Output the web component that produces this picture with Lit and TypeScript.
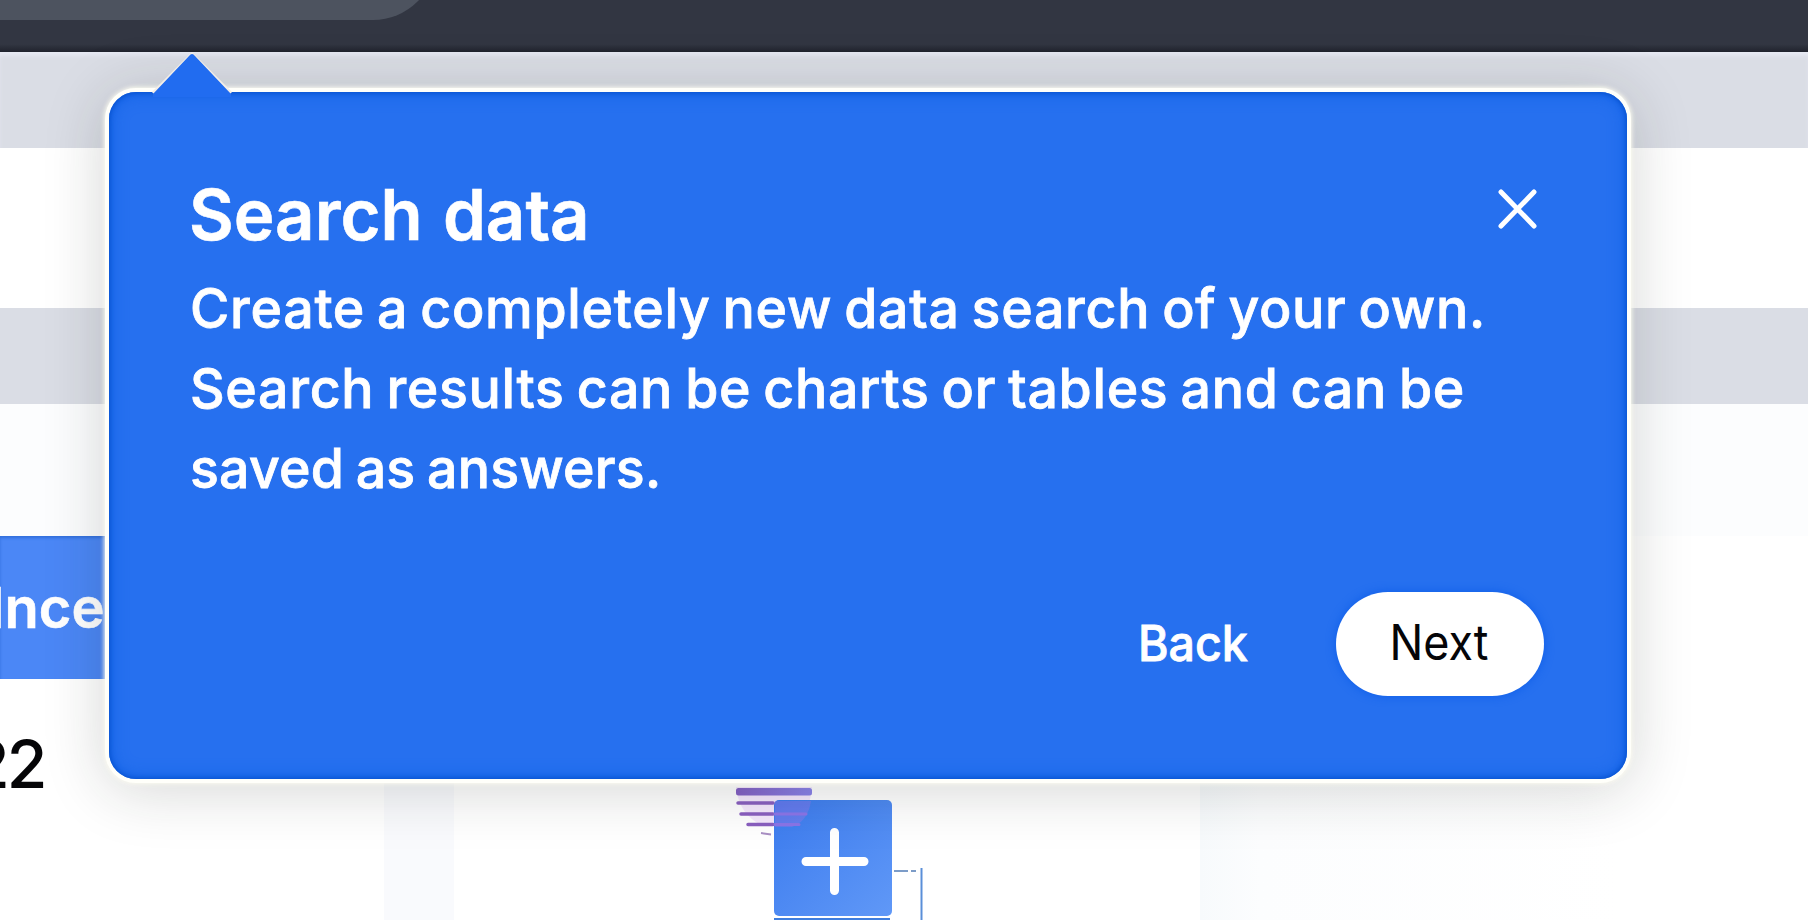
import { LitElement, html, css } from 'lit';
import { customElement, property } from 'lit/decorators.js';

@customElement('tour-popover')
export class TourPopover extends LitElement {
  @property() heading = '';
  @property({ attribute: false }) lines: string[] = [];

  static styles = css`
    :host {
      display: block;
      box-sizing: border-box;
      width: 1518px;
      height: 687px;
      padding: 79px 83px 83px 80px;
      border-radius: 27px;
      background: #2670ef;
      color: #fff;
      box-shadow:
        inset 0 0 5px 1px #0650cd,
        inset 0 0 16px 2px #1263e6,
        0 0 0 4px #fffffa,
        0 0 4px 5px #fbfbf0,
        0 6px 60px 6px rgba(30, 32, 30, 0.18);
    }
    .arrow {
      position: absolute;
      left: 42px;
      top: -40px;
      width: 84px;
      height: 45px;
      overflow: visible;
    }
    .content {
      display: flex;
      flex-direction: column;
      height: 100%;
    }
    .top {
      display: flex;
      justify-content: space-between;
      height: 97px;
    }
    h2 {
      margin: 0;
      font-size: 70px;
      font-weight: 600;
      line-height: 87px;
      white-space: nowrap;
      word-spacing: 3px;
      transform-origin: left;
      transform: scaleX(0.983);
      -webkit-text-stroke: 0.6px #fff;
    }
    .close {
      width: 40px;
      height: 40px;
      margin: 18px 6px 0 0;
    }
    p {
      margin: 0;
      font-size: 55px;
      font-weight: 500;
      line-height: 80px;
      letter-spacing: 0.7px;
      word-spacing: -3px;
      white-space: nowrap;
      transform-origin: left;
      transform: translateX(1px) scaleX(0.976);
      -webkit-text-stroke: 0.8px #fff;
    }
    .line {
      display: block;
    }
    .line:last-child {
      letter-spacing: 0.2px;
    }
    .actions {
      display: flex;
      justify-content: flex-end;
      align-items: center;
      gap: 76px;
      margin-top: auto;
    }
    button {
      padding: 0;
      border: 0;
      background: none;
      font: 500 49px/102px Inter, sans-serif;
      color: #fff;
    }
    .back {
      width: 132px;
      -webkit-text-stroke: 0.8px #fff;
    }
    .next {
      width: 208px;
      height: 104px;
      border-radius: 52px;
      background: #fff;
      color: #050508;
      font-weight: 400;
      box-shadow: 0 0 8px 1px #1261ea;
    }
    .label {
      display: inline-block;
      transform: translateX(-1px) scaleX(0.95);
    }
    .next .label {
      transform: translate(-1px, -1px) scaleX(0.915);
    }
  `;

  render() {
    return html`
      <svg class="arrow" viewBox="0 0 84 45">
        <path d="M2 41 L41 2 L80 41" fill="none" stroke="#f3eee8" stroke-width="3" />
        <path d="M2 42 L38 4 Q41 0 44 4 L80 42 V45 H2Z" fill="#216cf0" />
      </svg>
      <div class="content">
        <div class="top">
          <h2>${this.heading}</h2>
          <svg class="close" viewBox="0 0 40 40">
            <path d="M3 3 L36 37 M36 3 L3 37" stroke="#fff" stroke-width="5" stroke-linecap="round" />
          </svg>
        </div>
        <p>${this.lines.map((line) => html`<span class="line">${line}</span>`)}</p>
        <div class="actions">
          <button class="back"><span class="label">Back</span></button>
          <button class="next"><span class="label">Next</span></button>
        </div>
      </div>
    `;
  }
}

@customElement('app-root')
export class AppRoot extends LitElement {
  static styles = css`
    :host {
      display: flex;
      flex-direction: column;
      position: relative;
      width: 1808px;
      height: 920px;
      overflow: hidden;
      background: #fff;
      font-family: Inter, sans-serif;
    }
    header {
      flex: none;
      height: 52px;
      overflow: hidden;
      background: linear-gradient(#323642 85%, #20232d);
    }
    .search {
      width: 436px;
      height: 79px;
      margin-top: -59px;
      border-radius: 0 0 63px 0;
      background: #4d535f;
    }
    .band {
      flex: none;
      height: 96px;
      background: #dadde5;
    }
    .first {
      box-shadow: inset 0 5px 5px -2px #e9ebf5;
    }
    .toolbar {
      flex: none;
      height: 160px;
    }
    .subbar {
      flex: none;
      height: 132px;
      background: #fcfdfe;
    }
    .board {
      flex: 1;
      display: flex;
      min-height: 0;
    }
    .left {
      width: 384px;
      background: #fff;
    }
    .tab {
      display: flex;
      align-items: center;
      width: 384px;
      height: 143px;
      background: #4b87f6;
      color: #fff;
      font-size: 56px;
      font-weight: 600;
      box-shadow: inset 0 2px 3px #3270dc;
    }
    .tab span {
      margin-left: -11px;
      -webkit-text-stroke: 0.6px #fff;
    }
    .day {
      margin: 45px 0 0 -31px;
      color: #050507;
      font-size: 66px;
      font-weight: 500;
      line-height: 80px;
      letter-spacing: -3px;
    }
    .gutter {
      width: 70px;
      background: #f9fafd;
    }
    .canvas {
      display: flex;
      width: 746px;
      background: #fff;
    }
    .canvas svg {
      margin: 246px 0 0 276px;
    }
    .right {
      flex: 1;
      background: linear-gradient(90deg, #f7fafc, #fcfdfe 60px, #fff 420px);
    }
    tour-popover {
      position: absolute;
      left: 109px;
      top: 92px;
    }
  `;

  render() {
    return html`
      <header><div class="search"></div></header>
      <div class="band first"></div>
      <div class="toolbar"></div>
      <div class="band"></div>
      <div class="subbar"></div>
      <div class="board">
        <div class="left">
          <div class="tab"><span>Ince</span></div>
          <div class="day">22</div>
        </div>
        <div class="gutter"></div>
        <div class="canvas">
          <svg width="200" height="138" viewBox="730 782 200 138">
            <defs>
              <linearGradient id="tile" x1="0" y1="0" x2="1" y2="1">
                <stop offset="0" stop-color="#3b7bee" />
                <stop offset="1" stop-color="#6098f7" />
              </linearGradient>
              <linearGradient id="lens">
                <stop offset="0" stop-color="#8460c4" />
                <stop offset="1" stop-color="#8a83ea" />
              </linearGradient>
            </defs>
            <path d="M736 787 H812 Q810 812 794 826 H763 Q739 815 736 787Z" fill="#efd9fb" opacity="0.6" />
            <path d="M774 919 H890" stroke="#3f7ddd" stroke-width="2" />
            <rect x="774" y="800" width="118" height="116" rx="5" fill="url(#tile)" />
            <path d="M775 801 H811 Q808 821 792 827 H775Z" fill="#a476ef" opacity="0.35" />
            <rect x="736" y="788" width="76" height="7.500" rx="2.500" fill="url(#lens)" />
            <path d="M738 803 H773 M741 814 H773 M748 824.500 H773" stroke="#8a5fc0" stroke-width="3.500" stroke-linecap="round" />
            <path d="M775 814 H806 M775 824.500 H799" stroke="#8b75e8" stroke-width="3" stroke-linecap="round" />
            <path d="M761 833 L771 834.500" stroke="#a98fc4" stroke-width="2" />
            <path d="M834.500 832.500 V890.500 M806 861.500 H864" stroke="#fff" stroke-width="9" stroke-linecap="round" />
            <path d="M894 871 H908 M911 871 H916" stroke="#7c9cc8" stroke-width="2" />
            <path d="M921.500 868 V920" stroke="#5a8fd8" stroke-width="2" />
          </svg>
        </div>
        <div class="right"></div>
      </div>
      <tour-popover
        heading="Search data"
        .lines=${[
          'Create a completely new data search of your own.',
          'Search results can be charts or tables and can be',
          'saved as answers.',
        ]}
      ></tour-popover>
    `;
  }
}
